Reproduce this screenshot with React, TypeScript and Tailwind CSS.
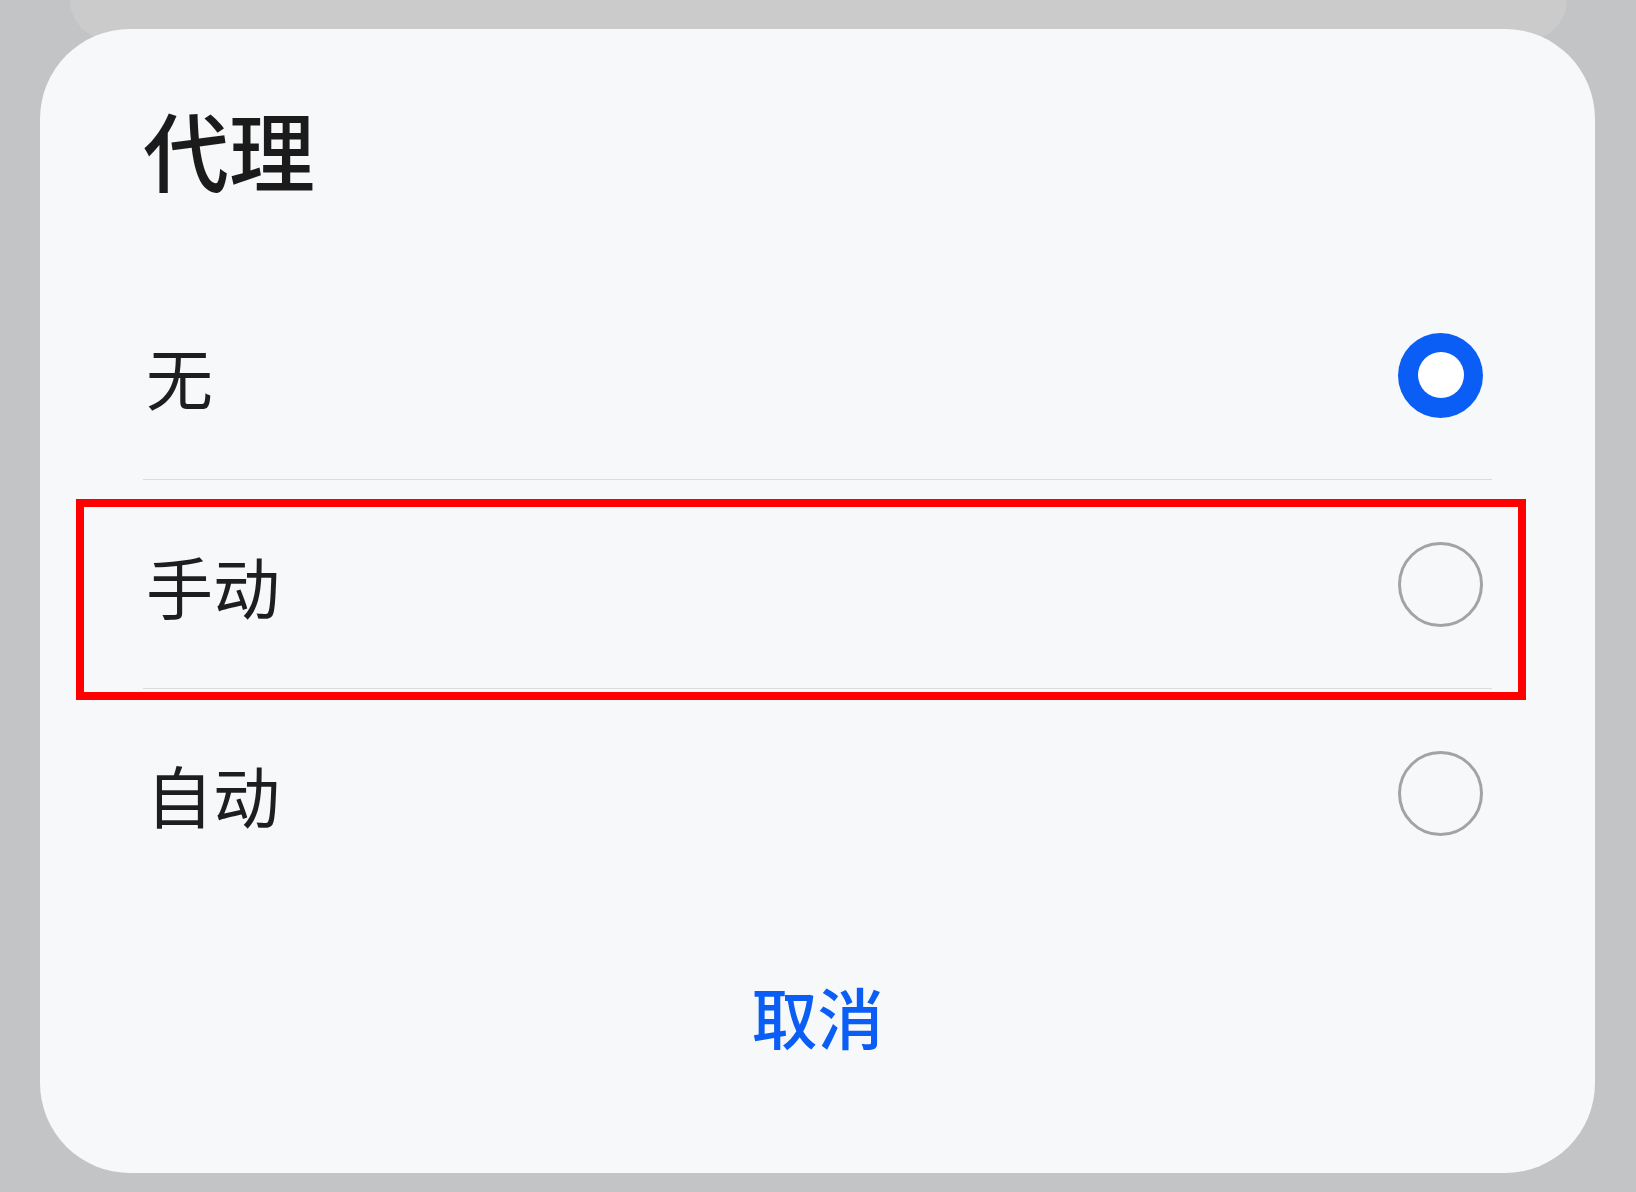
const options = [
  { label: "无", selected: true },
  { label: "手动", selected: false },
  { label: "自动", selected: false },
];

function Radio({ selected }: { selected: boolean }) {
  if (selected) {
    return (
      <div className="mr-[9px] flex h-[85px] w-[85px] items-center justify-center rounded-full bg-[#0b5ef5]">
        <div className="h-[46px] w-[46px] rounded-full bg-white" />
      </div>
    );
  }
  return <div className="mr-[9px] h-[85px] w-[85px] rounded-full border-[3px] border-[#a3a3a3]" />;
}

export default function App() {
  return (
    <div
      className="flex h-[1192px] w-[1636px] flex-col overflow-hidden bg-[#c3c4c6]"
      style={{ fontFamily: '"Noto Sans CJK SC", "Noto Sans", sans-serif' }}
    >
      {/* sheet behind the dialog */}
      <div className="ml-[70px] h-[40px] w-[1497px] shrink-0 rounded-b-[60px] bg-[#cbcbcb]" />

      <div className="relative -mt-[11px] ml-[40px] flex h-[1144px] w-[1555px] shrink-0 flex-col rounded-[90px] bg-[#f7f8f9] px-[103px]">
        <div className="pt-[77px] text-[86px] font-medium leading-none text-[#1b1b1b]">代理</div>

        <div className="mt-[79px] flex flex-col">
          {options.map((opt, i) => (
            <div
              key={opt.label}
              className={
                i < options.length - 1
                  ? "flex h-[209px] items-center justify-between border-b-[1.5px] border-[#dcdcdc]"
                  : "flex h-[209px] items-center justify-between"
              }
            >
              <span className="pl-[3px] text-[67px] leading-none text-[#1e1e1e]">{opt.label}</span>
              <Radio selected={opt.selected} />
            </div>
          ))}
        </div>

        <div className="mt-[84px] text-center text-[66px] font-medium leading-none text-[#0b5ef5]">取消</div>

        {/* highlight box */}
        <div className="pointer-events-none absolute left-[36px] top-[470px] h-[201px] w-[1450px] border-[8px] border-[#ff0000]" />
      </div>
    </div>
  );
}
